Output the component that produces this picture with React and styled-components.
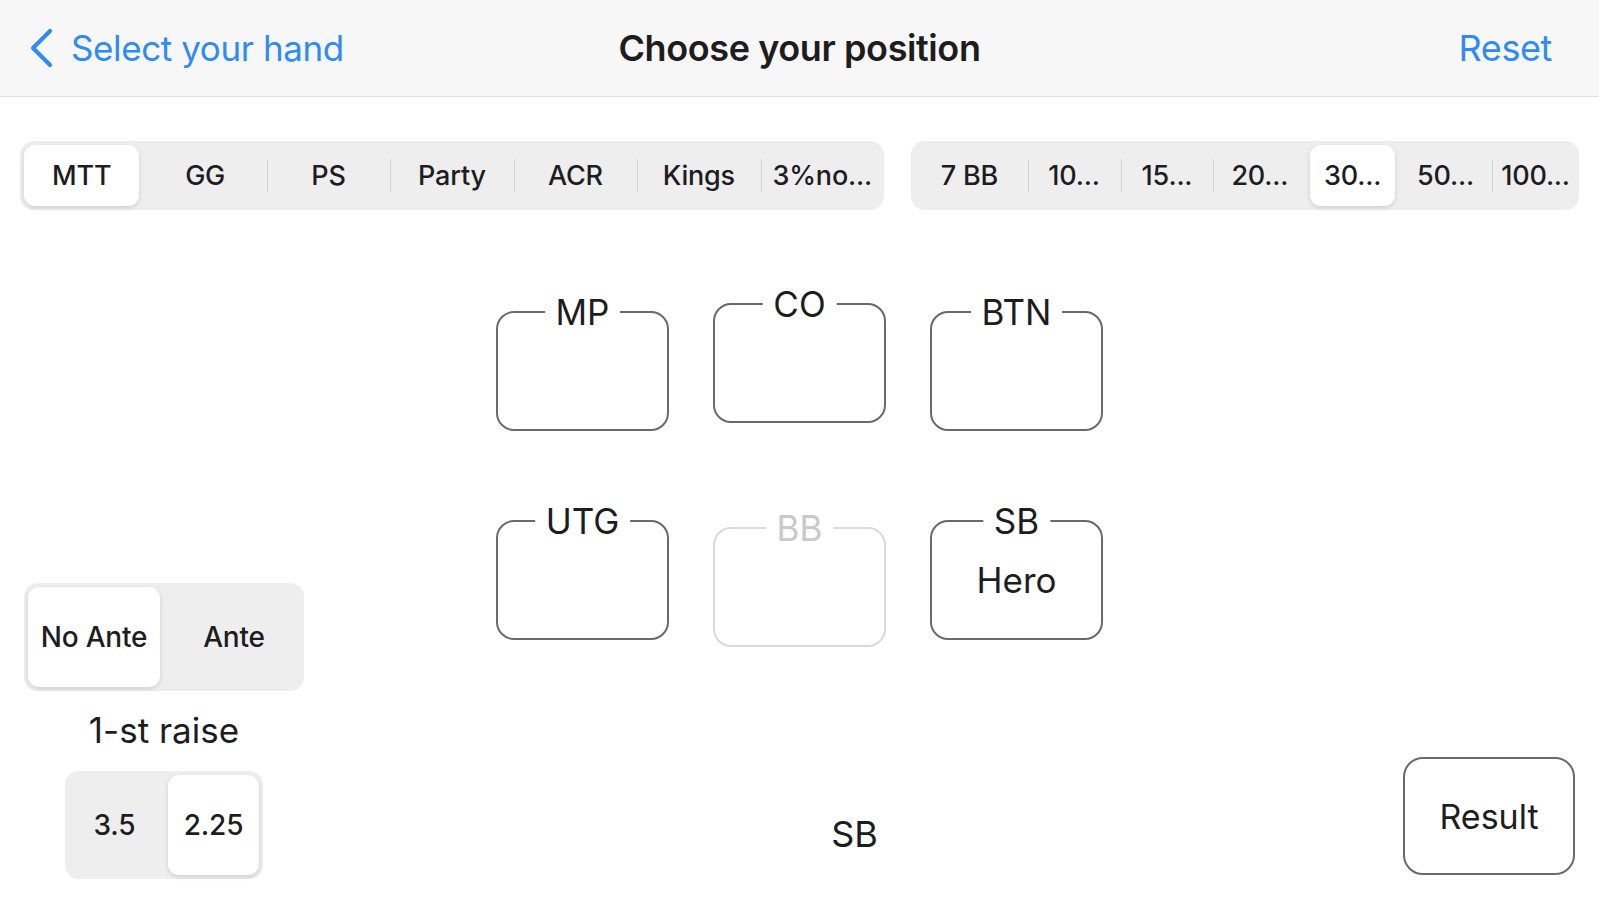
import { createGlobalStyle, styled } from 'styled-components';

const GlobalStyle = createGlobalStyle`
  html, body {
    margin: 0;
    padding: 0;
    background: #ffffff;
  }
  body {
    font-family: Inter, "Liberation Sans", sans-serif;
    color: #1d1d1f;
  }
`;

const BLUE = '#2f8bf3';

const Page = styled.div`
  width: 1599px;
  height: 900px;
  display: flex;
  flex-direction: column;
  overflow: hidden;
`;

const Header = styled.header`
  height: 96px;
  flex: none;
  display: grid;
  grid-template-columns: 1fr auto 1fr;
  align-items: center;
  padding: 0 29px;
  background: #f7f7f7;
  border-bottom: 1px solid #e1e1e1;
`;

const BackLink = styled.div`
  display: flex;
  align-items: center;
  gap: 18px;
  color: ${BLUE};
  font-size: 35px;
  letter-spacing: -0.4px;
`;

const Title = styled.div`
  font-size: 36px;
  font-weight: 600;
  letter-spacing: -0.4px;
`;

const ResetLink = styled.div`
  justify-self: end;
  padding-right: 18px;
  color: ${BLUE};
  font-size: 36px;
  letter-spacing: -0.4px;
`;

const TabsRow = styled.div`
  display: flex;
  gap: 27px;
  padding: 44px 20px 0;
  flex: none;
`;

const Track = styled.div`
  display: flex;
  padding: 4px 0;
  border-radius: 14px;
  background: #eeeeef;
  width: ${(p) => p.$width};
  height: ${(p) => p.$height};
  box-sizing: border-box;
  flex: ${(p) => (p.$grow ? 1 : 'none')};
`;

const Slot = styled.div`
  position: relative;
  flex: ${(p) => p.$weight} 1 0;
  display: flex;
  padding: 0 4px;
  min-width: 0;

  &::before {
    content: '';
    display: ${(p) => (p.$divider ? 'block' : 'none')};
    position: absolute;
    left: 0;
    top: 14px;
    bottom: 14px;
    width: 1px;
    background: #d4d4d6;
  }
`;

const Pill = styled.div`
  flex: 1;
  display: flex;
  align-items: center;
  justify-content: center;
  border-radius: 11px;
  font-size: ${(p) => p.$size};
  font-weight: 500;
  letter-spacing: -0.2px;
  color: #1d1d1f;
  white-space: nowrap;
  background: ${(p) => (p.$active ? '#ffffff' : 'transparent')};
  box-shadow: ${(p) => (p.$active ? '0 2px 5px rgba(0,0,0,0.13)' : 'none')};
`;

const Main = styled.main`
  flex: 1;
  display: grid;
  grid-template-columns: 1fr auto 1fr;
`;

const LeftPanel = styled.div`
  align-self: end;
  justify-self: start;
  width: 280px;
  margin: 0 0 21px 24px;
  display: flex;
  flex-direction: column;
  align-items: center;
`;

const RaiseLabel = styled.div`
  font-size: 35px;
  line-height: 38px;
  margin: 20px 0 22px;
  color: #1d1d1f;
`;

const Center = styled.div`
  display: flex;
  flex-direction: column;
  justify-content: space-between;
  padding-top: 93px;
`;

const SeatGrid = styled.div`
  display: grid;
  grid-template-columns: repeat(3, 173px);
  column-gap: 44px;
  row-gap: 89px;
  align-items: start;
`;

const Seat = styled.div`
  position: relative;
  height: 120px;
  margin-top: ${(p) => p.$shift || 0}px;
  border: 2px solid ${(p) => (p.$muted ? '#dadada' : '#6a6a6a')};
  border-radius: 18px;
  box-sizing: border-box;
  display: flex;
  align-items: center;
  justify-content: center;
  font-size: 35px;
  color: #1d1d1f;
`;

const SeatLabel = styled.span`
  position: absolute;
  top: -1px;
  left: 50%;
  transform: translate(-50%, -50%);
  padding: 0 11px;
  background: #ffffff;
  font-size: 35px;
  line-height: 1;
  color: ${(p) => (p.$muted ? '#c9c9c9' : '#1d1d1f')};
`;

const HeroPosition = styled.div`
  font-size: 36px;
  line-height: 40px;
  margin: 0 0 46px 110px;
  text-align: center;
`;

const ResultButton = styled.button`
  align-self: end;
  justify-self: end;
  width: 172px;
  height: 118px;
  margin: 0 24px 25px 0;
  border: 2px solid #6a6a6a;
  border-radius: 20px;
  background: #ffffff;
  font-family: inherit;
  font-size: 34px;
  color: #1d1d1f;
`;

const rooms = ['MTT', 'GG', 'PS', 'Party', 'ACR', 'Kings', '3%no...'];
const stacks = ['7 BB', '10...', '15...', '20...', '30...', '50...', '100...'];
const stackWeights = [1.28, 1, 1, 1, 1, 1, 0.93];

const seats = [
  { name: 'MP', shift: 8 },
  { name: 'CO', shift: 0 },
  { name: 'BTN', shift: 8 },
  { name: 'UTG', shift: 0 },
  { name: 'BB', shift: 7, muted: true },
  { name: 'SB', shift: 0, hero: true },
];

function Segmented({ items, active, size, weights, ...rest }) {
  return (
    <Track {...rest}>
      {items.map((item, i) => {
        const divider = i > 0 && i !== active && i - 1 !== active;
        return (
          <Slot key={item} $divider={divider} $weight={weights ? weights[i] : 1}>
            <Pill $active={i === active} $size={size}>
              {item}
            </Pill>
          </Slot>
        );
      })}
    </Track>
  );
}

function App() {
  return (
    <Page>
      <GlobalStyle />
      <Header>
        <BackLink>
          <svg width="24" height="40" viewBox="0 0 24 40" fill="none">
            <path d="M21 3 L4 20 L21 37" stroke={BLUE} strokeWidth="4.2" strokeLinecap="round" strokeLinejoin="round" />
          </svg>
          Select your hand
        </BackLink>
        <Title>Choose your position</Title>
        <ResetLink>Reset</ResetLink>
      </Header>

      <TabsRow>
        <Segmented items={rooms} active={0} size="27px" $width="864px" $height="69px" />
        <Segmented items={stacks} active={4} size="27px" weights={stackWeights} $grow $height="69px" />
      </TabsRow>

      <Main>
        <LeftPanel>
          <Segmented items={['No Ante', 'Ante']} active={0} size="28px" $width="280px" $height="108px" />
          <RaiseLabel>1-st raise</RaiseLabel>
          <Segmented items={['3.5', '2.25']} active={1} size="28px" $width="198px" $height="108px" />
        </LeftPanel>

        <Center>
          <SeatGrid>
            {seats.map((s) => (
              <Seat key={s.name} $shift={s.shift} $muted={s.muted}>
                <SeatLabel $muted={s.muted}>{s.name}</SeatLabel>
                {s.hero && 'Hero'}
              </Seat>
            ))}
          </SeatGrid>
          <HeroPosition>SB</HeroPosition>
        </Center>

        <ResultButton>Result</ResultButton>
      </Main>
    </Page>
  );
}

export default App;
